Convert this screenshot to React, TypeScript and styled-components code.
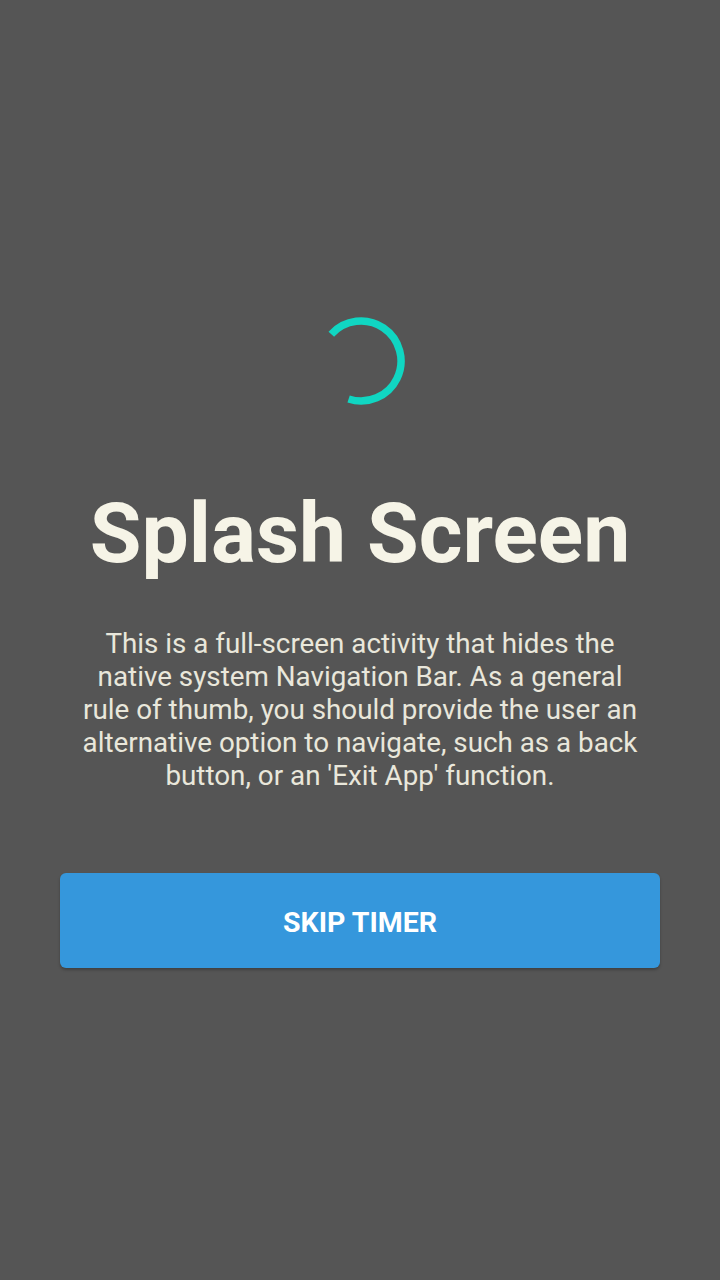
import React from "react";
import styled, { createGlobalStyle } from "styled-components";

const Global = createGlobalStyle`
  html, body { margin: 0; padding: 0; background: #555555; }
  body { font-family: Roboto, "Noto Sans", sans-serif; }
`;

const Screen = styled.div`
  width: 720px;
  height: 1280px;
  background: #555555;
  display: flex;
  flex-direction: column;
  align-items: center;
  box-sizing: border-box;
  padding-top: 316px;
`;

const Spinner = styled.svg`
  width: 90px;
  height: 90px;
  display: block;
  margin-left: 2px;
`;

const Title = styled.h1`
  margin: 78px 0 0 0;
  font-family: Roboto, sans-serif;
  font-weight: 700;
  font-size: 84px;
  line-height: 100px;
  color: #f6f4e7;
  letter-spacing: 0;
`;

const Body = styled.p`
  margin: 43px 0 0 0;
  width: 570px;
  text-align: center;
  font-family: Roboto, sans-serif;
  font-weight: 400;
  font-size: 27.8px;
  line-height: 33px;
  color: #e9e7db;
`;

const Button = styled.button`
  margin-top: 81px;
  width: 600px;
  height: 95px;
  padding: 3px 0 0 0;
  border: none;
  border-radius: 6px;
  background: #3597dc;
  color: #ffffff;
  font-family: Roboto, sans-serif;
  font-weight: 700;
  font-size: 28.5px;
  letter-spacing: 0;
  box-shadow: 0 2px 3px rgba(0, 0, 0, 0.25);
`;

export default function App() {
  return (
    <>
      <Global />
      <Screen>
        <Spinner viewBox="0 0 90 90">
          <path
            d="M 15.3 18.2 A 40 40 0 1 1 32.6 83"
            fill="none"
            stroke="#10d6c2"
            strokeWidth="7.5"
          />
        </Spinner>
        <Title>Splash Screen</Title>
        <Body>
          This is a full-screen activity that hides the native system Navigation
          Bar. As a general rule of thumb, you should provide the user an
          alternative option to navigate, such as a back button, or an 'Exit
          App' function.
        </Body>
        <Button>SKIP TIMER</Button>
      </Screen>
    </>
  );
}
